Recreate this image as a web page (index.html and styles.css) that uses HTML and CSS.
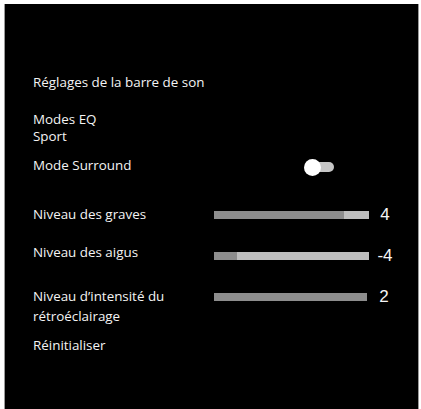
FILE: index.html
```html
<!DOCTYPE html>
<html lang="fr">
<head>
<meta charset="utf-8">
<title>Réglages de la barre de son</title>
<link rel="stylesheet" href="styles.css">
</head>
<body>
<div class="panel">
  <div class="title">Réglages de la barre de son</div>
  <div class="eq">Modes EQ<br>Sport</div>
  <div class="row surround">
    <div class="label">Mode Surround</div>
    <div class="ctrl ctrl-toggle">
      <div class="toggle"><span class="knob"></span><span class="track"></span></div>
    </div>
  </div>
  <div class="row graves">
    <div class="label">Niveau des graves</div>
    <div class="ctrl">
      <div class="bar"><div class="fill" style="width:130px"></div></div>
      <div class="value">4</div>
    </div>
  </div>
  <div class="row aigus">
    <div class="label">Niveau des aigus</div>
    <div class="ctrl ctrl-low">
      <div class="bar"><div class="fill" style="width:23px"></div></div>
      <div class="value">-4</div>
    </div>
  </div>
  <div class="row intensite">
    <div class="label label-two">Niveau d’intensité du<br>rétroéclairage</div>
    <div class="ctrl ctrl-top1">
      <div class="bar bar-short"><div class="fill" style="width:153px"></div></div>
      <div class="value value-wide">2</div>
    </div>
  </div>
  <div class="reset">Réinitialiser</div>
</div>
</body>
</html>
```
FILE: styles.css
```css
html, body {
  margin: 0;
  padding: 0;
  background: #ffffff;
}
body {
  font-family: "Open Sans", "Noto Sans", sans-serif;
  font-size: 13.4px;
  color: #f4f4f4;
}
.panel {
  margin-top: 4px;
  margin-left: 4px;
  width: 415px;
  height: calc(100vh - 4px);
  box-sizing: border-box;
  background: #000;
  border-left: 1px solid #9a9a9a;
  border-right: 1px solid #9a9a9a;
  padding: 69px 0 0 28px;
  line-height: 18px;
  overflow: hidden;
}
.title { height: 18px; }
.eq {
  margin-top: 20px;
  line-height: 17px;
}
.row {
  display: flex;
  align-items: flex-start;
}
.label {
  width: 181px;
  flex: none;
}
.surround { margin-top: 11px; }
.graves { margin-top: 29px; }
.aigus { margin-top: 18px; }
.intensite { margin-top: 20px; }
.label-two { line-height: 20px; }
.reset { margin-top: 10px; }

.ctrl {
  display: flex;
  align-items: center;
  height: 20px;
}
.ctrl-low { margin-top: 3px; }
.ctrl-top1 { margin-top: 1px; }
.ctrl-toggle {
  height: 18px;
  margin-top: 2px;
}
.toggle {
  display: flex;
  align-items: center;
  margin-left: 90px;
}
.knob {
  position: relative;
  z-index: 1;
  width: 17px;
  height: 17px;
  border-radius: 50%;
  background: #ffffff;
}
.track {
  width: 22px;
  height: 10px;
  margin-left: -9px;
  border-radius: 0 5px 5px 0;
  background: #c6c6c6;
}
.bar {
  width: 155px;
  height: 8px;
  background: #bebebe;
  display: flex;
}
.bar-short { width: 153px; }
.fill {
  height: 100%;
  background: #8d8d8d;
}
.value {
  width: 32px;
  text-align: center;
  font-family: "Liberation Sans", Arial, sans-serif;
  font-size: 17px;
  line-height: 20px;
  color: #f6f6f6;
}
.value-wide { width: 34px; }
```
